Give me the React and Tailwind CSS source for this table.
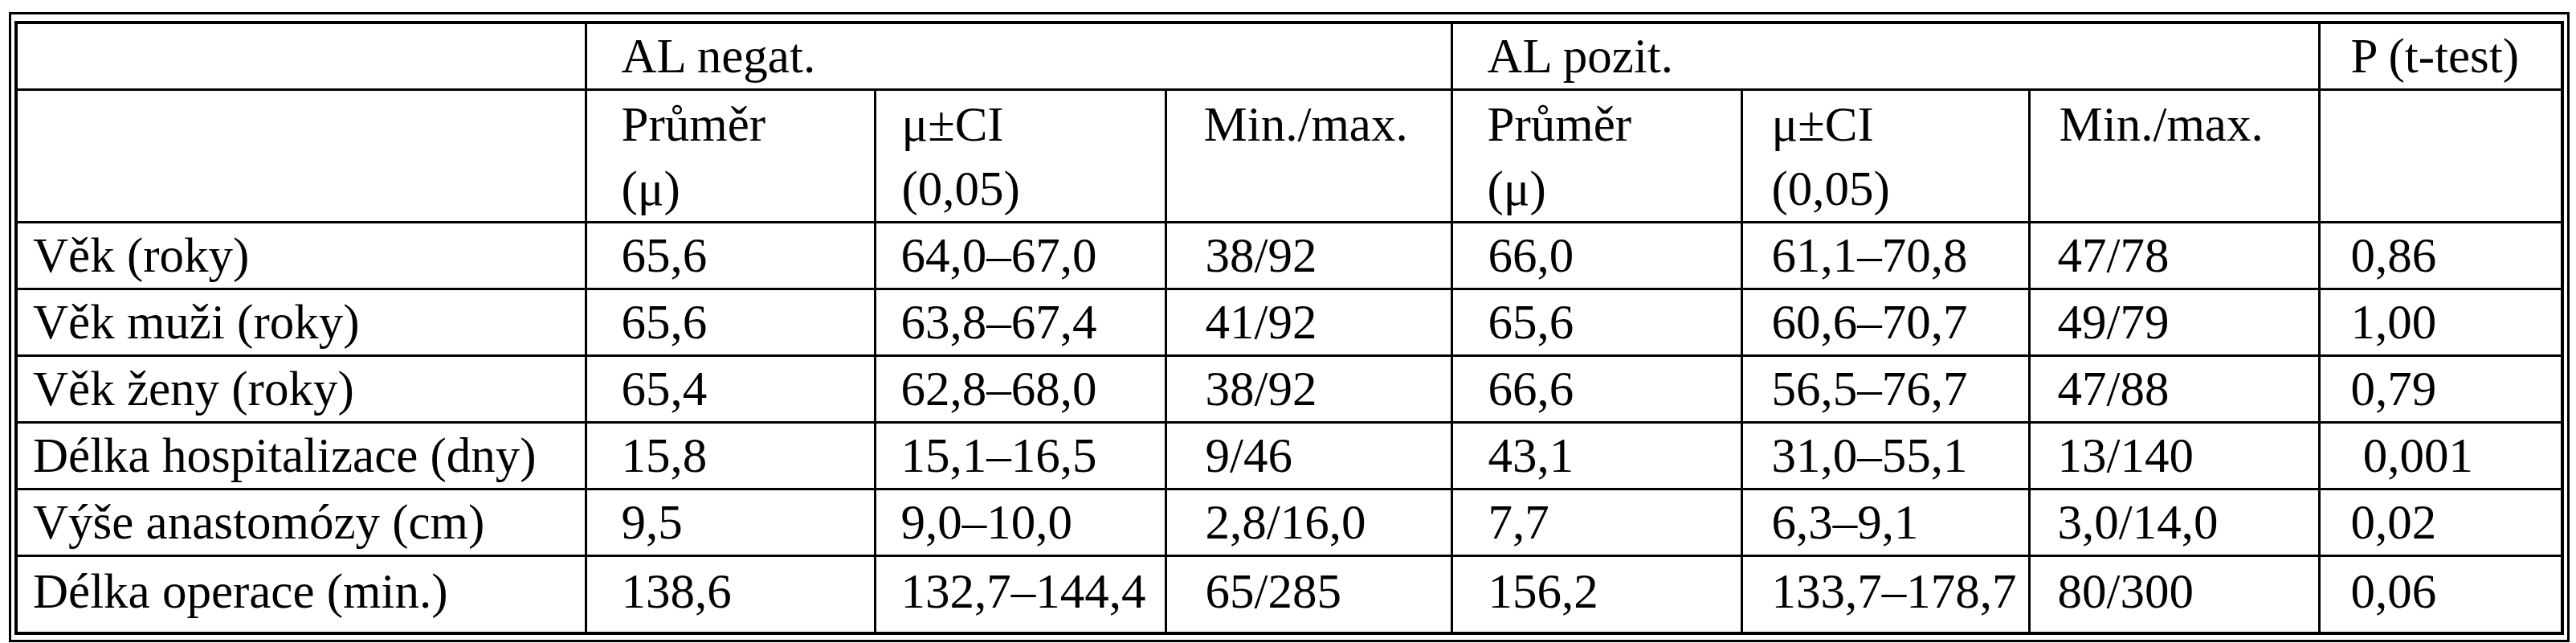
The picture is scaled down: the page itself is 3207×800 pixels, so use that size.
import React from "react";

const font = { fontFamily: '"Liberation Serif", "Times New Roman", serif' };

const pads = ["pl-[19px]", "pl-[43px]", "pl-[31px]", "pl-[48px]", "pl-[44px]", "pl-[36px]", "pl-[34px]", "pl-[38px]"];

const rows = [
  ["Věk (roky)", "65,6", "64,0–67,0", "38/92", "66,0", "61,1–70,8", "47/78", "0,86"],
  ["Věk muži (roky)", "65,6", "63,8–67,4", "41/92", "65,6", "60,6–70,7", "49/79", "1,00"],
  ["Věk ženy (roky)", "65,4", "62,8–68,0", "38/92", "66,6", "56,5–76,7", "47/88", "0,79"],
  ["Délka hospitalizace (dny)", "15,8", "15,1–16,5", "9/46", "43,1", "31,0–55,1", "13/140", "\u00a00,001"],
  ["Výše anastomózy (cm)", "9,5", "9,0–10,0", "2,8/16,0", "7,7", "6,3–9,1", "3,0/14,0", "0,02"],
  ["Délka operace (min.)", "138,6", "132,7–144,4", "65/285", "156,2", "133,7–178,7", "80/300", "0,06"],
];

const cell = "border-[3px] border-black align-top p-0 text-left font-normal whitespace-nowrap";

export default function App() {
  return (
    <div className="w-[3207px] h-[800px] bg-white text-black" style={font}>
      <div className="ml-[11px] mt-[15px] w-[3188px] border-[3px] border-black pl-[4px] pr-[8px] pt-[8px] pb-[6px]">
        <table className="w-[3170px] table-fixed border-collapse border-4 border-black text-[61px] leading-[80px]">
          <colgroup>
            <col className="w-[709px]" />
            <col className="w-[360px]" />
            <col className="w-[362px]" />
            <col className="w-[356px]" />
            <col className="w-[361px]" />
            <col className="w-[358px]" />
            <col className="w-[361px]" />
            <col className="w-[303px]" />
          </colgroup>
          <thead>
            <tr className="h-[78px]">
              <th className={cell}></th>
              <th colSpan={3} className={`${cell} pl-[43px]`}>AL negat.</th>
              <th colSpan={3} className={`${cell} pl-[43px]`}>AL pozit.</th>
              <th className={`${cell} pl-[38px]`}>P (t-test)</th>
            </tr>
            <tr className="h-[163px]">
              <th className={cell}></th>
              <th className={`${cell} pl-[43px] pt-[2px]`}>Průměr<br />(μ)</th>
              <th className={`${cell} pl-[32px] pt-[2px]`}>μ±CI<br />(0,05)</th>
              <th className={`${cell} pl-[46px] pt-[2px]`}>Min./max.</th>
              <th className={`${cell} pl-[43px] pt-[2px]`}>Průměr<br />(μ)</th>
              <th className={`${cell} pl-[36px] pt-[2px]`}>μ±CI<br />(0,05)</th>
              <th className={`${cell} pl-[36px] pt-[2px]`}>Min./max.</th>
              <th className={cell}></th>
            </tr>
          </thead>
          <tbody>
            {rows.map((r, i) => (
              <tr key={i} className={i === rows.length - 1 ? "h-[96px]" : "h-[82px]"}>
                {r.map((v, j) => (
                  <td key={j} className={`${cell} ${pads[j]} ${i === rows.length - 1 ? "pt-[3px]" : ""}`}>
                    {v}
                  </td>
                ))}
              </tr>
            ))}
          </tbody>
        </table>
      </div>
    </div>
  );
}
